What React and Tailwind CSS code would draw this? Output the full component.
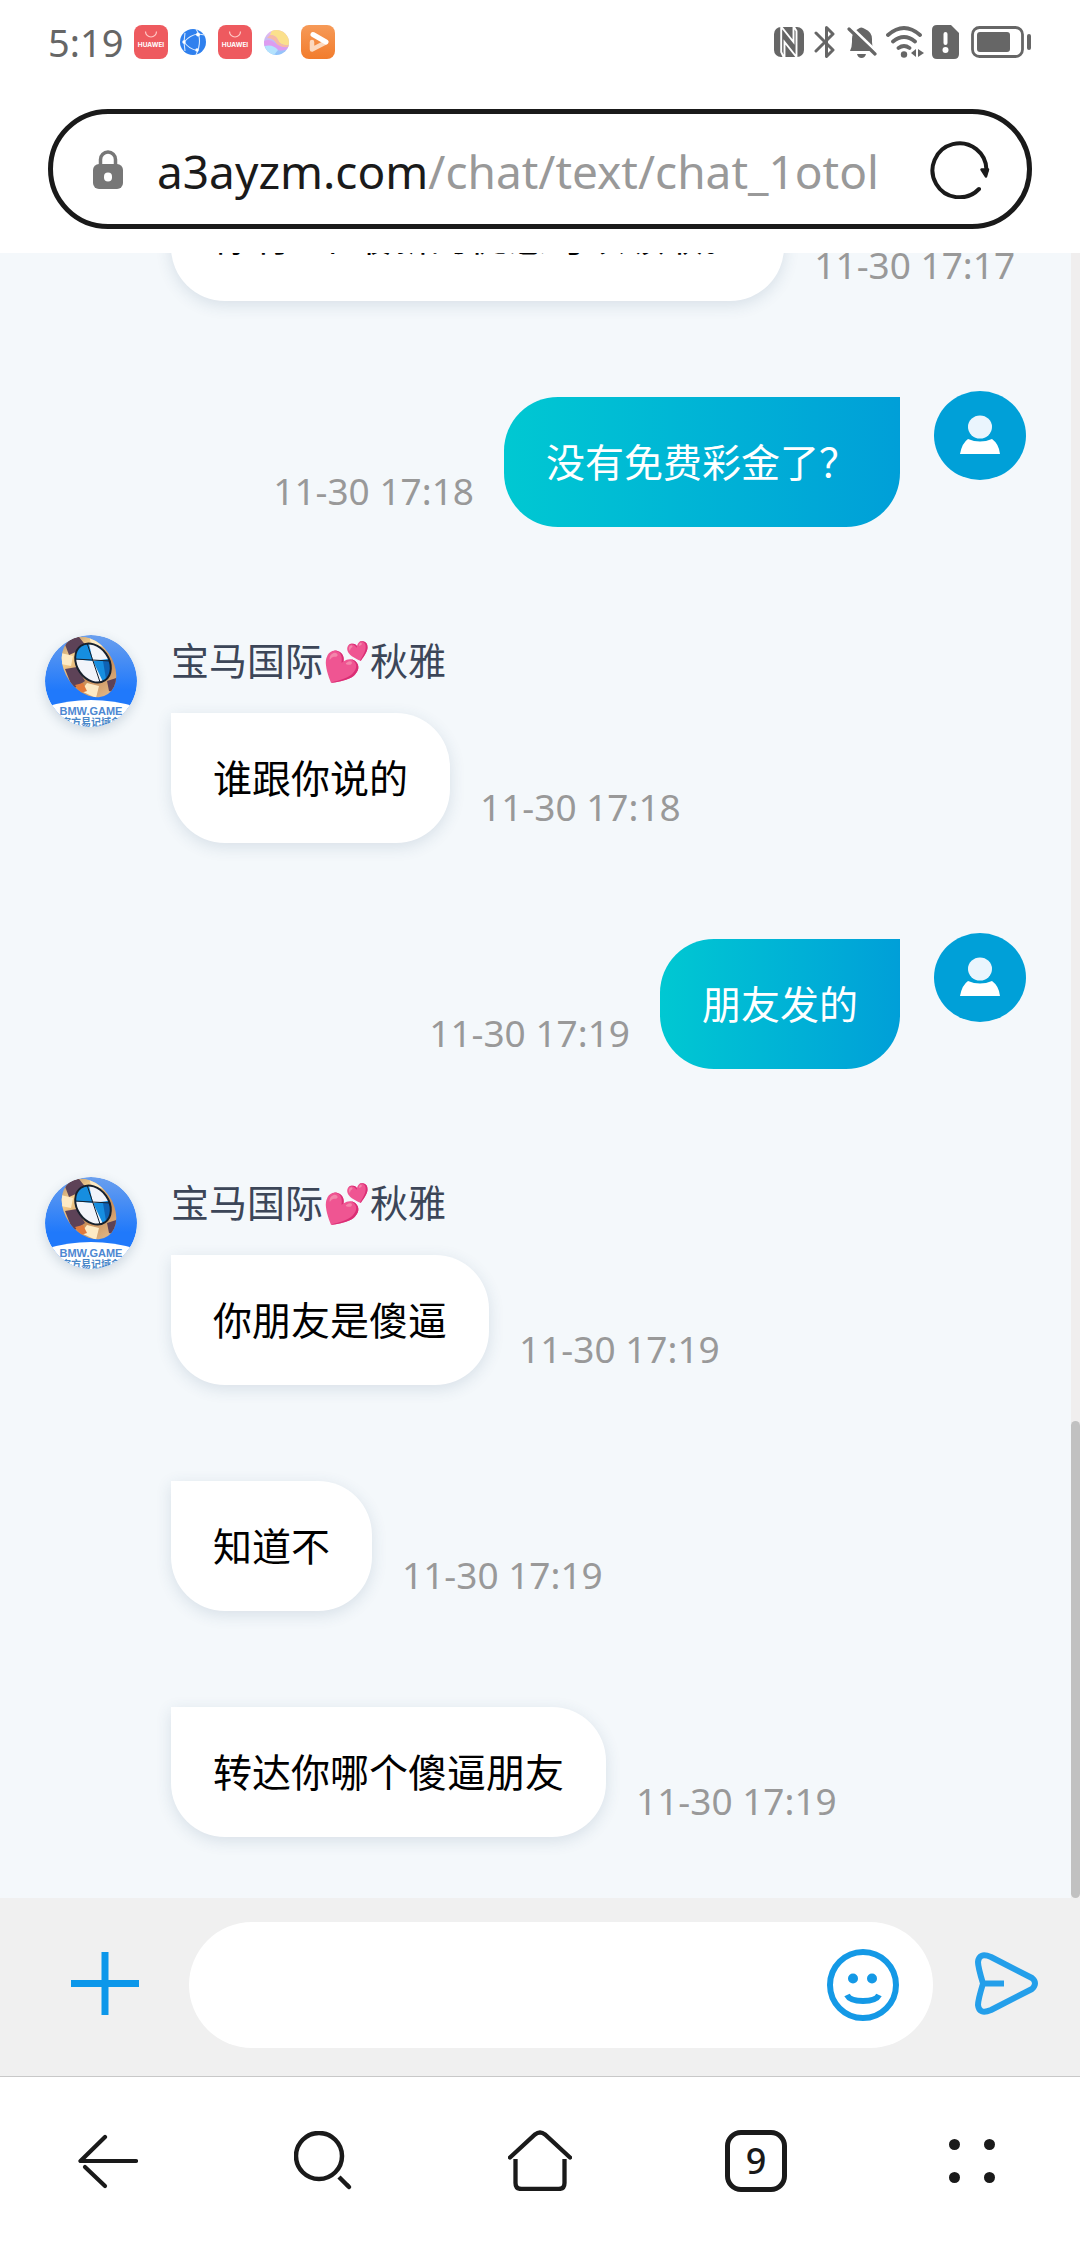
import React from "react";

const cjk = "font-['Noto_Sans','Noto_Sans_CJK_SC',sans-serif]";

function StoreIcon() {
  return (
    <svg className="size-[34px]" viewBox="0 0 34 34" role="img" aria-label="HUAWEI">
      <rect width="34" height="34" rx="8" fill="#ee5a5f" />
      <path d="M11.500 6.500a5.500 5.500 0 0 0 11 0" fill="none" stroke="#ffc9c6" strokeWidth="1.200" />
      <text x="17" y="22" textAnchor="middle" fontFamily="Inter, sans-serif" fontWeight="700" fontSize="6.500" fill="#fff">HUAWEI</text>
    </svg>
  );
}

function GlobeIcon() {
  return (
    <svg className="size-[26px]" viewBox="0 0 26 26" aria-hidden="true">
      <circle cx="13" cy="13" r="13" fill="#2f80ee" />
      <path d="M4 13Q10 6 18 5M4 13Q9 20 17 21.500M16 0q7 11 0 26M5 4 4 13l1 9M18 5l7 1" fill="none" stroke="#d9eaff" strokeWidth="1.100" />
      <circle cx="4" cy="13" r="1.700" fill="#fff" /><circle cx="18" cy="5.500" r="1.900" fill="#fff" /><circle cx="17" cy="21" r="1.700" fill="#fff" />
    </svg>
  );
}

function OrbIcon() {
  return (
    <svg className="size-[25px]" viewBox="0 0 25 25" aria-hidden="true">
      <defs>
        <clipPath id="orb"><circle cx="12.500" cy="12.500" r="12.500" /></clipPath>
        <linearGradient id="orbA" x1="0" y1="0" x2="0" y2="1"><stop offset="0" stopColor="#efb6ee" /><stop offset="1" stopColor="#8cc4fb" /></linearGradient>
      </defs>
      <g clipPath="url(#orb)">
        <rect width="25" height="25" fill="url(#orbA)" />
        <path d="M8 0h17v15q-9 1-11-5-2-5-8-5Z" fill="#fbe08c" />
        <path d="M6 5q6 0 8 5 2 6 11 5v2q-9 2-13-4-3-5-9-5Z" fill="#f7b9a6" />
        <path d="M0 11q6-3 11 2 5 5 14 4-4 5-11 3-6-5-14-4Z" fill="#dd9cf0" />
        <path d="M1 16q8-2 13 4l-4 5H4Z" fill="#b4e2fd" />
      </g>
    </svg>
  );
}

function VideoIcon() {
  return (
    <svg className="size-[34px]" viewBox="0 0 34 34" aria-hidden="true">
      <defs><linearGradient id="vid" x1="0" y1="0" x2="0" y2="1"><stop offset="0" stopColor="#f69a58" /><stop offset="1" stopColor="#f27c2c" /></linearGradient></defs>
      <rect width="34" height="34" rx="8" fill="url(#vid)" />
      <path d="M11 17v7.500l13.500-7" fill="none" stroke="#fcd9bf" strokeWidth="4.500" strokeLinecap="round" strokeLinejoin="round" />
      <path d="M12 9.500 25 17" stroke="#fff" strokeWidth="5" strokeLinecap="round" />
    </svg>
  );
}

function StatusBar() {
  return (
    <header className="flex h-[84px] items-center justify-between pl-12 pr-[49px] text-[#666]">
      <div className="flex items-center">
        <time className="font-['Noto_Sans',sans-serif] text-[38px] leading-none">5:19</time>
        <div className="ml-[11px] flex items-center gap-3">
          <StoreIcon />
          <GlobeIcon />
          <StoreIcon />
          <OrbIcon />
          <VideoIcon />
        </div>
      </div>
      <div className="flex items-center">
        <svg className="h-[30px] w-[30px]" viewBox="0 0 30 30" aria-label="NFC" role="img">
          <rect width="30" height="30" rx="7" fill="#666" />
          <path d="M10 31 7.200 25V-1M7.500 0 19.500 15V0M19.500 -1l3 5v27M22.500 30 10.500 15v15" fill="none" stroke="#fff" strokeWidth="1.900" />
        </svg>
        <svg className="ml-[10px] h-[34px] w-[22px]" viewBox="0 0 22 34" fill="none" stroke="#666" strokeWidth="3" strokeLinecap="round" strokeLinejoin="round" aria-label="Bluetooth" role="img">
          <path d="m2 8 17 17-6.500 6.500v-29L19 9 2 26" />
        </svg>
        <svg className="ml-[11px] h-8 w-[30px]" viewBox="0 0 30 32" aria-label="Muted" role="img">
          <path d="M3 25q2-4 2-9v-3q0-7 6-10 3-3 7 0 7 3 7 10v3q0 5 2 9ZM10 28h9q-1 4-4.500 4T10 28Z" fill="#666" />
          <path d="m4 1 27 26" stroke="#fff" strokeWidth="3" />
          <path d="m2 3 26 25" stroke="#666" strokeWidth="3.200" strokeLinecap="round" />
        </svg>
        <svg className="ml-[9px] h-[32px] w-[38px]" viewBox="0 0 38 32" fill="none" stroke="#666" strokeWidth="3.800" strokeLinecap="round" aria-label="Wi-Fi" role="img">
          <path d="M2 9q16-14 32 0M7 15.500q11-9 22 0M12.500 22q5.500-4 11 0" />
          <circle cx="18" cy="28.500" r="3.200" fill="#666" stroke="none" />
          <path d="m30 23-5 4 5 4ZM32 23l6 4-6 4Z" fill="#666" stroke="none" />
        </svg>
        <svg className="ml-2 h-[34px] w-[27px]" viewBox="0 0 27 34" aria-label="SIM alert" role="img">
          <path d="M5 0h14l8 8v21q0 5-5 5H5q-5 0-5-5V5Q0 0 5 0Z" fill="#666" />
          <path d="M13.500 9v9" stroke="#fff" strokeWidth="4" strokeLinecap="round" /><circle cx="13.500" cy="25" r="3" fill="#fff" />
        </svg>
        <svg className="ml-3 h-8 w-[60px]" viewBox="0 0 60 32" aria-label="Battery" role="img">
          <rect x="1.500" y="1.500" width="50" height="29" rx="7" fill="none" stroke="#666" strokeWidth="2.800" />
          <rect x="6" y="6" width="33" height="20" rx="3" fill="#666" />
          <rect x="56" y="8" width="4" height="16" rx="2" fill="#666" />
        </svg>
      </div>
    </header>
  );
}

function AddressBar() {
  return (
    <div className="px-12 pb-6 pt-[25px]">
      <div className="flex h-[120px] items-center rounded-full border-[5px] border-[#1a1a1a] pl-10 pr-[37px]">
        <svg className="h-[39px] w-[30px] shrink-0" viewBox="0 0 30 39" aria-label="Secure" role="img">
          <path d="M7.500 17V9.500a7.500 7.500 0 0 1 15 0V17" fill="none" stroke="#777" strokeWidth="3.500" />
          <rect y="14" width="30" height="25" rx="6" fill="#777" /><rect x="11" y="22.500" width="8" height="9" rx="4" fill="#fff" />
        </svg>
        <a href="#page" className="ml-[34px] min-w-0 flex-1 overflow-hidden whitespace-nowrap pt-1 font-['Noto_Sans',sans-serif] text-[46px] leading-[70px] text-[#1a1a1a]">
          a3ayzm.com<span className="text-[#999]">/chat/text/chat_1otol</span>
        </a>
        <button type="button" aria-label="Reload" className="ml-9 shrink-0">
          <svg className="size-[60px]" viewBox="0 0 60 60" fill="none" stroke="#1a1a1a" strokeWidth="4" strokeLinecap="round">
            <path d="M49 50a27 27 0 1 1 7.500-18" /><path d="M51.500 30.500h6.500l-2 7Z" fill="#1a1a1a" strokeWidth="2.500" strokeLinejoin="round" />
          </svg>
        </button>
      </div>
    </div>
  );
}

function UserAvatar() {
  return (
    <svg className="-mt-[6px] ml-[34px] h-[89px] w-[92px] shrink-0" viewBox="0 0 92 89" role="img" aria-label="User">
      <ellipse cx="46" cy="44.500" rx="46" ry="44.500" fill="#00a0d8" />
      <ellipse cx="46" cy="36" rx="12" ry="11.500" fill="#eaf5fd" />
      <path d="M34 48q12 5 24 0 7 5 8 15H26q2-11 8-15Z" fill="#fff" />
    </svg>
  );
}

function AgentAvatar() {
  return (
    <svg className="size-[92px] rounded-full shadow-[0_4px_12px_rgba(40,70,100,0.18)]" viewBox="0 0 92 92" role="img" aria-label="BMW.GAME">
      <defs>
        <linearGradient id="sky" x1="0" y1="0" x2="0" y2="1"><stop offset="0" stopColor="#6a9fee" /><stop offset="0.600" stopColor="#2079fb" /></linearGradient>
        <linearGradient id="gold" x1="0" y1="0" x2="1" y2="1"><stop offset="0" stopColor="#7c5b58" /><stop offset="0.300" stopColor="#f6cf8c" /><stop offset="0.550" stopColor="#c98f5a" /><stop offset="1" stopColor="#f6dcae" /></linearGradient>
        <clipPath id="disc"><circle cx="46" cy="46" r="46" /></clipPath>
        <clipPath id="chip"><ellipse cx="44" cy="32" rx="24" ry="33" transform="rotate(-35 44 32)" /></clipPath>
        <clipPath id="face"><ellipse cx="48" cy="28" rx="16" ry="21" transform="rotate(-35 48 28)" /></clipPath>
      </defs>
      <g clipPath="url(#disc)">
        <rect width="92" height="92" fill="url(#sky)" />
        <g clipPath="url(#chip)">
          <rect width="92" height="70" fill="url(#gold)" />
          <path d="M18 4 34 2l8 10-18 8ZM20 34l12-2 8 14-12 8ZM62 46l12-4-2 16-8-2Z" fill="#5d4257" />
          <path d="M44 0 56 4l4 8-14-3ZM16 18l12 3-2 10-10-2ZM36 56l6-8 12 3-3 12Z" fill="#fdeac4" />
          <path d="m30 50 8-2 4 8-6 2Z" fill="#e07a3c" />
        </g>
        <g clipPath="url(#face)">
          <rect x="20" width="60" height="60" fill="#f2f4fa" />
          <path d="M48 26 28 24 22 0h20ZM48 26l22-3v28H60Z" fill="#168ee0" />
          <path d="m58 26 12-2v26H62Z" fill="#0f62b4" />
          <path d="m42 8 14 42M29 24l37 2" stroke="#16212f" strokeWidth="1" />
        </g>
        <ellipse cx="48" cy="28" rx="16" ry="21" transform="rotate(-35 48 28)" fill="none" stroke="#17202c" strokeWidth="2" />
        <path d="M0 72q46-14 92 0v20H0Z" fill="#fff" />
        <text x="46" y="80" textAnchor="middle" fontFamily="Liberation Sans, sans-serif" fontSize="11" fontWeight="700" fill="#4d87d2">BMW.GAME</text>
        <text x="46" y="91" textAnchor="middle" fontFamily="Noto Sans CJK SC, sans-serif" fontSize="10" fontWeight="700" fill="#4a87c8">官方易记域名</text>
      </g>
    </svg>
  );
}

function Time({ children }) {
  return <time className="pb-[14px] font-['Noto_Sans',sans-serif] text-[37px] leading-[44px] text-[#999]">{children}</time>;
}

function Received({ name, text, time }) {
  return (
    <article className="flex pl-[45px]">
      <div className="w-[126px] shrink-0">{name && <div className="pt-3"><AgentAvatar /></div>}</div>
      <div>
        {name && <h2 className="h-[90px] pt-3 text-[38px] leading-[50px] text-[#3c4658]">{name}</h2>}
        <div className="flex items-end gap-[30px] whitespace-nowrap">
          <p className="rounded-[54px] rounded-tl-none bg-white px-[42px] py-9 text-[39px] leading-[58px] text-black shadow-[0_4px_16px_rgba(40,80,110,0.14)]">{text}</p>
          <Time>{time}</Time>
        </div>
      </div>
    </article>
  );
}

function Sent({ text, time }) {
  return (
    <article className="flex justify-end pr-[45px]">
      <div className="flex items-end gap-[30px] whitespace-nowrap">
        <Time>{time}</Time>
        <p className="rounded-[54px] rounded-tr-none bg-linear-to-r from-[#00c8d2] to-[#009fd8] px-[42px] py-9 text-[39px] leading-[58px] text-white">{text}</p>
      </div>
      <UserAvatar />
    </article>
  );
}

function Composer() {
  return (
    <form className="flex items-center border-b border-[#c8c8c8] bg-[#f0f0f0] pb-7 pt-6 pl-[71px] pr-[42px]" onSubmit={(e) => e.preventDefault()}>
      <button type="button" aria-label="Add attachment" className="pb-1">
        <svg className="h-[63px] w-[68px]" viewBox="0 0 68 63" stroke="#0c97ea" strokeWidth="7"><path d="M34 0v63M0 31.500h68" /></svg>
      </button>
      <div className="ml-[50px] flex h-[126px] min-w-0 flex-1 items-center rounded-full bg-white pl-12 pr-[34px]">
        <input aria-label="Message" className="h-full min-w-0 flex-1 bg-transparent text-[39px] outline-none" />
        <button type="button" aria-label="Emoji">
          <svg className="size-[72px]" viewBox="0 0 72 72" fill="none" stroke="#1499e6" strokeWidth="6">
            <circle cx="36" cy="36" r="33" /><path d="M20 46q3 6 16 6t16-6" />
            <circle cx="26" cy="29.500" r="5" fill="#1499e6" stroke="none" /><circle cx="45" cy="29.500" r="5" fill="#1499e6" stroke="none" />
          </svg>
        </button>
      </div>
      <button type="submit" aria-label="Send" className="ml-[42px] pb-1">
        <svg className="size-[63px]" viewBox="0 0 63 63" fill="none" stroke="#249fea" strokeWidth="6" strokeLinejoin="round">
          <path d="M16 5 57 26q6 5 0 11L16 58Q4 63 3 53q0-5 5-21.500Q3 15 3 10 4 0 16 5ZM8 31.500h21" />
        </svg>
      </button>
    </form>
  );
}

function NavBar() {
  const cell = "flex h-[167px] items-center justify-center";
  return (
    <nav className="grid grid-cols-5 bg-white" aria-label="Browser">
      <button type="button" aria-label="Back" className={cell}>
        <svg className="h-[56px] w-[60px]" viewBox="0 0 60 56" fill="none" stroke="#1a1a1a" strokeWidth="4.200" strokeLinecap="round">
          <path d="M27 4 2.500 28H58" strokeLinejoin="round" /><path d="m7 34 20 19" />
        </svg>
      </button>
      <button type="button" aria-label="Search" className={cell}>
        <svg className="h-[60px] w-[60px]" viewBox="0 0 60 60" fill="none" stroke="#1a1a1a" strokeWidth="4.500">
          <circle cx="25" cy="25" r="23" /><path d="m45 46 9 9" /><path d="m54 55 1 1" strokeLinecap="round" />
        </svg>
      </button>
      <button type="button" aria-label="Home" className={cell}>
        <svg className="h-[61px] w-[64px]" viewBox="0 0 64 61" fill="none" stroke="#1a1a1a" strokeWidth="4.300">
          <path d="M2 27.500 27 4.500q5-4 10 0l25 23" strokeLinecap="round" /><path d="M7.500 29v24q0 6 6 6h37q6 0 6-6V29" />
        </svg>
      </button>
      <button type="button" aria-label="9 tabs" className={cell}>
        <span className="flex size-[62px] items-center justify-center rounded-2xl border-[5px] border-[#1a1a1a] font-['Noto_Sans',sans-serif] text-[36px] font-medium leading-none text-[#1a1a1a]">9</span>
      </button>
      <button type="button" aria-label="Menu" className={cell}>
        <svg className="h-[44px] w-[46px]" viewBox="0 0 46 44" fill="#1a1a1a">
          <circle cx="5.500" cy="5.500" r="5.500" /><circle cx="40.500" cy="5.500" r="5.500" /><circle cx="5.500" cy="38.500" r="5.500" /><circle cx="40.500" cy="38.500" r="5.500" />
        </svg>
      </button>
    </nav>
  );
}

export default function App() {
  return (
    <div className={`flex h-screen flex-col bg-white ${cjk}`}>
      <StatusBar />
      <AddressBar />
      <main className="flex min-h-0 flex-1 bg-[#f4f8fb]">
        <section aria-label="Messages" className="flex min-w-0 flex-1 flex-col justify-end gap-24 overflow-hidden pb-[61px]">
          <Received text="你有1个最新的优惠可以领取。" time="11-30 17:17" />
          <Sent text="没有免费彩金了？" time="11-30 17:18" />
          <Received name="宝马国际💕秋雅" text="谁跟你说的" time="11-30 17:18" />
          <Sent text="朋友发的" time="11-30 17:19" />
          <Received name="宝马国际💕秋雅" text="你朋友是傻逼" time="11-30 17:19" />
          <Received text="知道不" time="11-30 17:19" />
          <Received text="转达你哪个傻逼朋友" time="11-30 17:19" />
        </section>
        <div className="flex w-[9px] shrink-0 flex-col justify-end bg-[#f0eeee]">
          <div className="h-[29%] rounded-full bg-[#c1c1c1]" />
        </div>
      </main>
      <Composer />
      <NavBar />
    </div>
  );
}
